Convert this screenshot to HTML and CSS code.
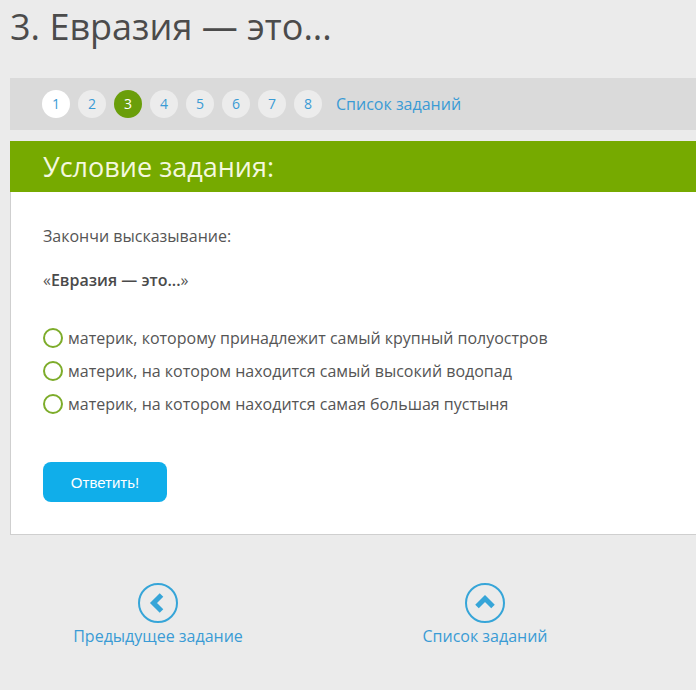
FILE: index.html
```html
<!DOCTYPE html>
<html lang="ru">
<head>
    <meta charset="UTF-8">
    <title>3. Евразия — это...</title>
    <link rel="stylesheet" href="styles.css">
</head>
<body>
    <div class="page">
        <h1 class="task-title">3. Евразия — это...</h1>

        <div class="task-nav">
            <a class="task-num visited" href="#">1</a>
            <a class="task-num" href="#">2</a>
            <a class="task-num current" href="#">3</a>
            <a class="task-num" href="#">4</a>
            <a class="task-num" href="#">5</a>
            <a class="task-num" href="#">6</a>
            <a class="task-num" href="#">7</a>
            <a class="task-num" href="#">8</a>
            <a class="task-list-link" href="#">Список заданий</a>
        </div>

        <div class="task-panel">
            <h2 class="task-head">Условие задания:</h2>
            <div class="task-body">
                <p class="task-text">Закончи высказывание:</p>
                <p class="task-text">«<b>Евразия — это...</b>»</p>

                <ul class="answers">
                    <li class="answer"><span class="radio"></span>материк, которому принадлежит самый крупный полуостров</li>
                    <li class="answer"><span class="radio"></span>материк, на котором находится самый высокий водопад</li>
                    <li class="answer"><span class="radio"></span>материк, на котором находится самая большая пустыня</li>
                </ul>

                <button class="answer-btn">Ответить!</button>
            </div>
        </div>

        <div class="bottom-nav">
            <a class="bottom-link" href="#">
                <svg width="40" height="40" viewBox="0 0 40 40">
                    <circle cx="20" cy="20" r="19" fill="none" stroke="#36a5d8" stroke-width="2"/>
                    <polyline points="23.5,12 15.5,20 23.5,28" fill="none" stroke="#36a5d8" stroke-width="5"/>
                </svg>
                <span>Предыдущее задание</span>
            </a>
            <a class="bottom-link" href="#">
                <svg width="40" height="40" viewBox="0 0 40 40">
                    <circle cx="20" cy="20" r="19" fill="none" stroke="#36a5d8" stroke-width="2"/>
                    <polyline points="12,23.5 20,15.5 28,23.5" fill="none" stroke="#36a5d8" stroke-width="5"/>
                </svg>
                <span>Список заданий</span>
            </a>
        </div>
    </div>
</body>
</html>
```

FILE: styles.css
```css
body {
    margin: 0;
    background-color: #ebebeb;
    font-family: "Open Sans", "DejaVu Sans", sans-serif;
    color: #555;
    overflow: hidden;
}
.page {
    margin-left: 10px;
}
.task-title {
    margin: 0;
    padding-top: 3px;
    height: 75px;
    font-size: 36px;
    line-height: 48px;
    font-weight: normal;
    color: #4b4b4b;
}
.task-nav {
    display: flex;
    align-items: center;
    gap: 8px;
    height: 52px;
    padding-left: 32px;
    background-color: #dadada;
    margin-right: -20px;
}
.task-num {
    width: 28px;
    height: 28px;
    border-radius: 50%;
    background-color: #ececec;
    color: #3a9bd5;
    font-size: 14px;
    line-height: 28px;
    text-align: center;
    text-decoration: none;
}
.task-num.visited {
    background-color: #fff;
}
.task-num.current {
    background-color: #6a9e0a;
    color: #fff;
}
.task-list-link {
    margin-left: 6px;
    font-size: 16px;
    color: #3a9bd5;
    text-decoration: none;
}
.task-panel {
    margin-top: 11px;
    margin-right: -20px;
    background-color: #fff;
    border-left: 1px solid #cfcfcf;
    border-bottom: 1px solid #cfcfcf;
}
.task-head {
    margin: 0 0 0 -1px;
    height: 51px;
    padding-left: 33px;
    background-color: #76aa00;
    color: #f4f8df;
    font-size: 27px;
    font-weight: normal;
    line-height: 51px;
}
.task-body {
    padding: 32px 32px 32px 32px;
}
.task-text {
    margin: 0 0 20px;
    font-size: 16px;
    line-height: 24px;
}
.task-text b {
    font-weight: 600;
    color: #4a4a4a;
}
.answers {
    list-style: none;
    margin: 29px 0 0;
    padding: 0;
}
.answer {
    display: flex;
    align-items: center;
    height: 33px;
    font-size: 16px;
}
.radio {
    width: 16px;
    height: 16px;
    border: 2px solid #7dac2a;
    border-radius: 50%;
    margin-right: 5px;
}
.answer-btn {
    margin-top: 42px;
    width: 124px;
    height: 40px;
    border: none;
    border-radius: 8px;
    background-color: #10aeea;
    color: #fff;
    font-family: "Liberation Sans", Arial, sans-serif;
    font-size: 15px;
}
.bottom-nav {
    display: flex;
    gap: 27px;
    margin-left: -2px;
    padding-top: 48px;
}
.bottom-link {
    width: 300px;
    display: flex;
    flex-direction: column;
    align-items: center;
    gap: 2px;
    color: #3a9bd5;
    font-size: 16px;
    text-decoration: none;
}
```
